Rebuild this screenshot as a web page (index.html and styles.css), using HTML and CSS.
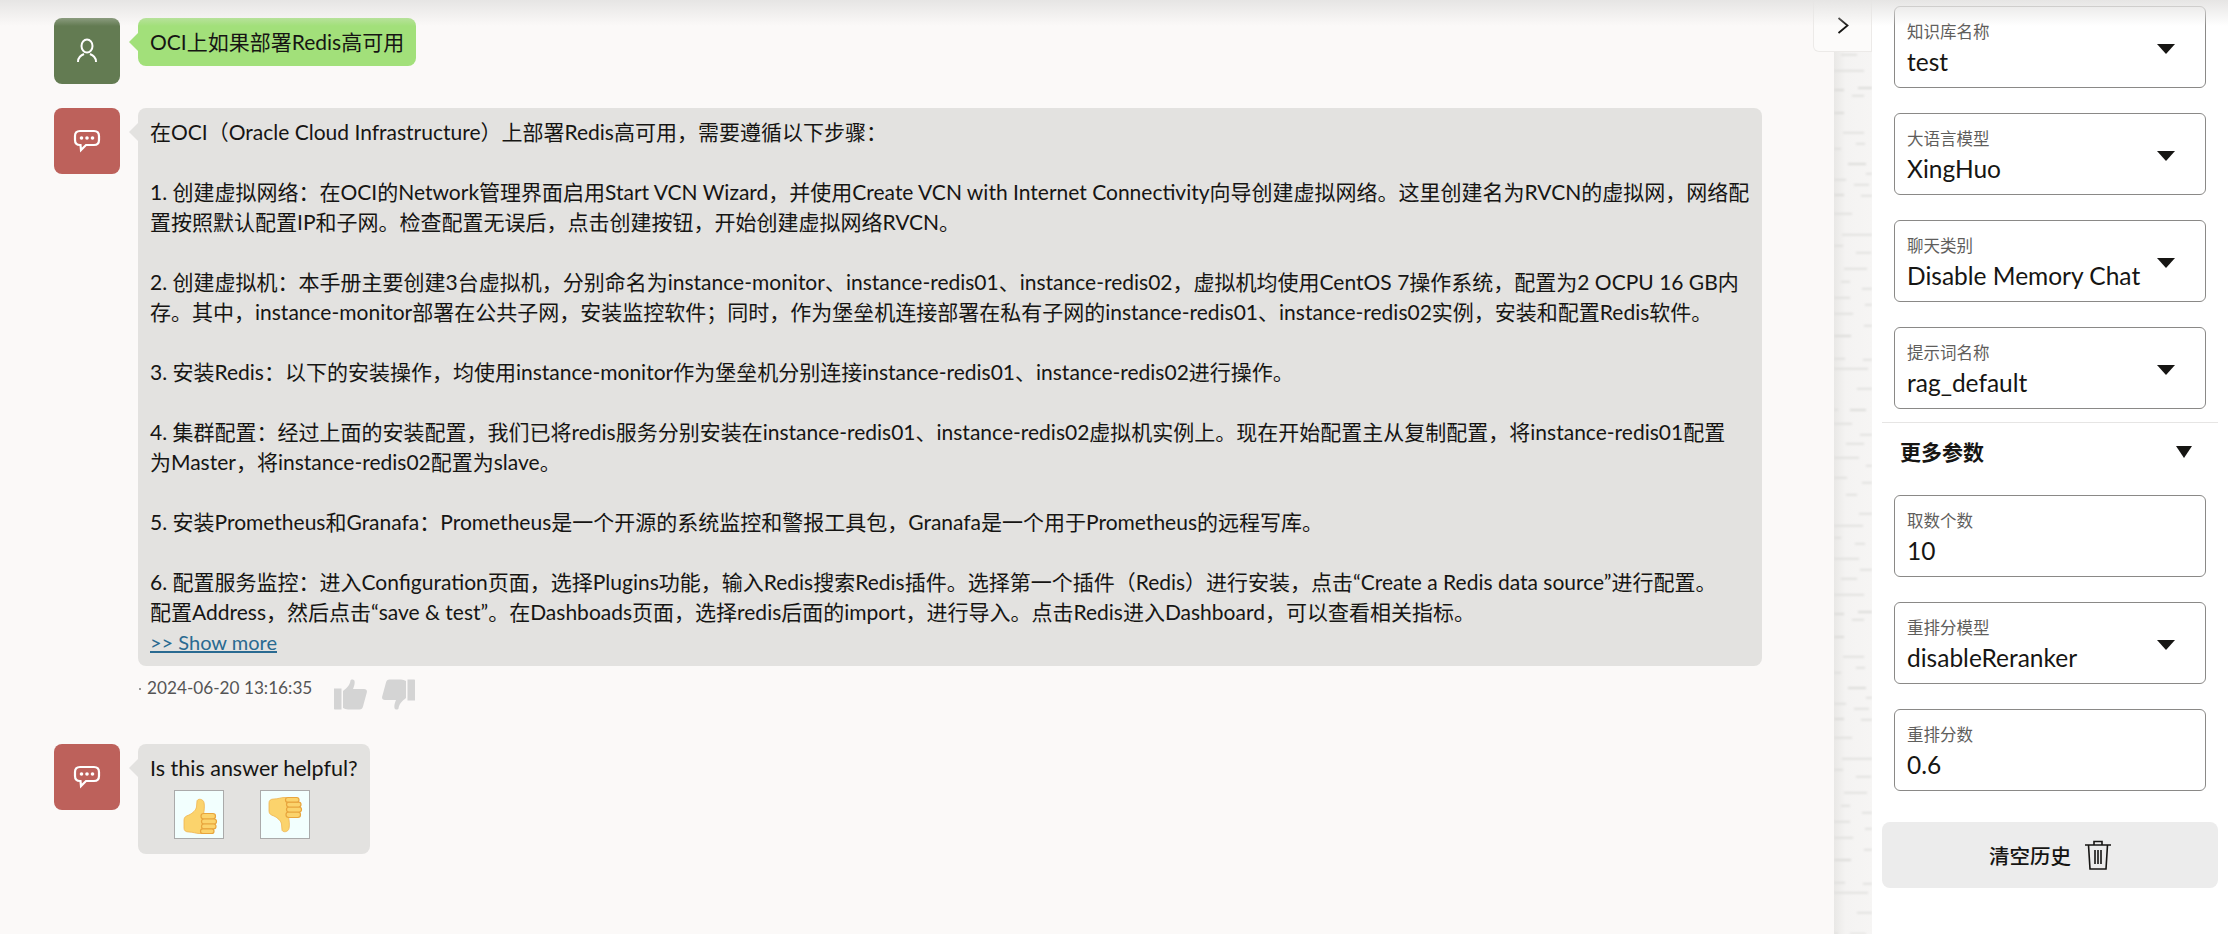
FILE: index.html
```html
<!DOCTYPE html>
<html>
<head>
  <title>Chat</title>
  <link rel="stylesheet" href="styles.css">
</head>
<body>
  <div class="top-shade"></div>
  <div class="page">
    <main class="chat">
      <div class="messages">
        <div class="row">
          <div class="avatar avatar-user">
            <svg width="24" height="26" viewBox="0 0 24 26" fill="none" stroke="#fff" stroke-width="2"><ellipse cx="12" cy="8" rx="5.5" ry="6.5"/><path d="M3 24c0-5 3-6.500 6-8M21 24c0-5-3-6.500-6-8"/></svg>
          </div>
          <div class="bubble bubble-user">OCI上如果部署Redis高可用</div>
        </div>

        <div class="row row-answer">
          <div class="avatar avatar-bot">
            <svg width="28" height="24" viewBox="0 0 28 24" fill="none" stroke="#fff" stroke-width="2.200"><path d="M7 2h14c3 0 5 2 5 5v4c0 3-2 5-5 5H13l-5 5-.5-5H7c-3 0-5-2-5-5V7c0-3 2-5 5-5z"/><g fill="#fff" stroke="none"><circle cx="8.500" cy="9" r="1.800"/><circle cx="14" cy="9" r="1.800"/><circle cx="19.500" cy="9" r="1.800"/></g></svg>
          </div>
          <div class="answer">
            <div class="bubble bubble-bot"><div class="answer-text">在OCI（Oracle Cloud Infrastructure）上部署Redis高可用，需要遵循以下步骤：

1. 创建虚拟网络：在OCI的Network管理界面启用Start VCN Wizard，并使用Create VCN with Internet Connectivity向导创建虚拟网络。这里创建名为RVCN的虚拟网，网络配
置按照默认配置IP和子网。检查配置无误后，点击创建按钮，开始创建虚拟网络RVCN。

2. 创建虚拟机：本手册主要创建3台虚拟机，分别命名为instance-monitor、instance-redis01、instance-redis02，虚拟机均使用CentOS 7操作系统，配置为2 OCPU 16 GB内
存。其中，instance-monitor部署在公共子网，安装监控软件；同时，作为堡垒机连接部署在私有子网的instance-redis01、instance-redis02实例，安装和配置Redis软件。

3. 安装Redis：以下的安装操作，均使用instance-monitor作为堡垒机分别连接instance-redis01、instance-redis02进行操作。

4. 集群配置：经过上面的安装配置，我们已将redis服务分别安装在instance-redis01、instance-redis02虚拟机实例上。现在开始配置主从复制配置，将instance-redis01配置
为Master，将instance-redis02配置为slave。

5. 安装Prometheus和Granafa：Prometheus是一个开源的系统监控和警报工具包，Granafa是一个用于Prometheus的远程写库。

6. 配置服务监控：进入Configuration页面，选择Plugins功能，输入Redis搜索Redis插件。选择第一个插件（Redis）进行安装，点击“Create a Redis data source”进行配置。
配置Address，然后点击“save &amp; test”。在Dashboads页面，选择redis后面的import，进行导入。点击Redis进入Dashboard，可以查看相关指标。</div><a class="show-more" href="#">&gt;&gt; Show more</a></div>
            <div class="meta">
              <span class="dot"></span>
              <span class="time">2024-06-20 13:16:35</span>
              <svg class="vote" width="33" height="31" viewBox="0 0 33 31" fill="#d4d4d4"><path d="M0 9.500h7.500v21H1c-.6 0-1-.4-1-1z"/><path d="M9 12c4-3 7-6 7.500-10.500C17 0 20 0 20.500 2c.6 2.500-.5 5.500-1.500 8h11c2.500 0 3.300 1.500 2.800 3.500L29 27.500c-.5 2-1.500 3-3.500 3H14c-2 0-3.500-1-5-1.500z"/></svg>
              <svg class="vote" width="33" height="31" viewBox="0 0 33 31" fill="#d4d4d4"><path d="M33 21.500h-7.500V.5H32c.6 0 1 .4 1 1z"/><path d="M24 19c-4 3-7 6-7.500 10.500C16 31 13 31 12.500 29c-.6-2.500.5-5.500 1.500-8H3c-2.500 0-3.300-1.500-2.800-3.500L4 3.500C4.500 1.500 5.500.5 7.500.5H19c2 0 3.500 1 5 1.500z"/></svg>
            </div>
          </div>
        </div>

        <div class="row">
          <div class="avatar avatar-bot">
            <svg width="28" height="24" viewBox="0 0 28 24" fill="none" stroke="#fff" stroke-width="2.200"><path d="M7 2h14c3 0 5 2 5 5v4c0 3-2 5-5 5H13l-5 5-.5-5H7c-3 0-5-2-5-5V7c0-3 2-5 5-5z"/><g fill="#fff" stroke="none"><circle cx="8.500" cy="9" r="1.800"/><circle cx="14" cy="9" r="1.800"/><circle cx="19.500" cy="9" r="1.800"/></g></svg>
          </div>
          <div class="bubble bubble-bot bubble-ask">
            <div>Is this answer helpful?</div>
            <div class="feedback">
              <button class="emoji-btn">
                <svg width="48" height="47" viewBox="0 0 48 47">
                  <g id="thumbHand">
                    <path d="M9 29c0-3 2-4 5-5 4-2 7-5 7.500-8 .3-2 .2-4 .5-6 .4-2.500 6-2.500 7 1.500 .7 3 .3 8-.5 12l-2 19H24c-3 0-6-1.500-10-1.500-3.500 0-5-1.500-5-4z" fill="#fbd36c" stroke="#efb450" stroke-width=".8"/>
                    <g fill="#fbd36c" stroke="#e8a53d" stroke-width="1.200">
                      <rect x="26" y="22.500" width="14.500" height="5.500" rx="2.700"/>
                      <rect x="26.500" y="28" width="15" height="5" rx="2.500"/>
                      <rect x="26.500" y="33" width="14.500" height="4.800" rx="2.400"/>
                      <rect x="25.500" y="37.800" width="13.500" height="4.700" rx="2.300"/>
                    </g>
                  </g>
                </svg>
              </button>
              <button class="emoji-btn">
                <svg width="48" height="47" viewBox="0 0 48 47">
                  <g transform="translate(-1 49) scale(1 -1)">
                    <path d="M9 29c0-3 2-4 5-5 4-2 7-5 7.500-8 .3-2 .2-4 .5-6 .4-2.500 6-2.500 7 1.500 .7 3 .3 8-.5 12l-2 19H24c-3 0-6-1.500-10-1.500-3.500 0-5-1.500-5-4z" fill="#fbd36c" stroke="#efb450" stroke-width=".8"/>
                    <g fill="#fbd36c" stroke="#e8a53d" stroke-width="1.200">
                      <rect x="26" y="22.500" width="14.500" height="5.500" rx="2.700"/>
                      <rect x="26.500" y="28" width="15" height="5" rx="2.500"/>
                      <rect x="26.500" y="33" width="14.500" height="4.800" rx="2.400"/>
                      <rect x="25.500" y="37.800" width="13.500" height="4.700" rx="2.300"/>
                    </g>
                  </g>
                </svg>
              </button>
            </div>
          </div>
        </div>
      </div>

      <div class="strip">
        <svg width="38" height="882">
          <defs>
            <linearGradient id="stripFade" x1="0" x2="1" y1="0" y2="0">
              <stop offset="0" stop-color="#e9e8e6"/>
              <stop offset="0.3" stop-color="#f4f3f2"/>
              <stop offset="1" stop-color="#f6f5f4"/>
            </linearGradient>
            <pattern id="stripDash" width="38" height="524" patternUnits="userSpaceOnUse">
              <g fill="#dcdbd9">
                <rect x="7" y="2" width="16" height="1.500"/><rect x="0" y="18" width="30" height="1.500"/><rect x="0" y="37" width="10" height="2"/><rect x="24" y="35" width="15" height="2"/><rect x="18" y="43" width="12" height="1.500"/>
                <rect x="0" y="60" width="10" height="2"/><rect x="9" y="80" width="21" height="1.500"/><rect x="22" y="91" width="9" height="1.500"/><rect x="0" y="96" width="7" height="1.500"/><rect x="14" y="111" width="18" height="2"/>
                <rect x="32" y="121" width="7" height="1.500"/><rect x="0" y="127" width="12" height="1.500"/><rect x="20" y="132" width="15" height="1.500"/><rect x="0" y="142" width="10" height="2"/><rect x="27" y="143" width="13" height="1.500"/>
                <rect x="0" y="161" width="18" height="1.500"/><rect x="8" y="182" width="31" height="1.500"/><rect x="0" y="193" width="9" height="1.500"/><rect x="22" y="200" width="15" height="1.500"/><rect x="10" y="216" width="23" height="1.500"/>
                <rect x="7" y="229" width="9" height="1.500"/><rect x="28" y="236" width="11" height="1.500"/><rect x="0" y="245" width="16" height="1.500"/><rect x="31" y="252" width="8" height="1.500"/><rect x="0" y="261" width="19" height="1.500"/>
                <rect x="30" y="273" width="9" height="1.500"/><rect x="0" y="283" width="17" height="2"/><rect x="0" y="306" width="11" height="1.500"/><rect x="29" y="307" width="10" height="1.500"/><rect x="0" y="316" width="34" height="1.500"/>
                <rect x="23" y="336" width="16" height="1.500"/><rect x="0" y="357" width="4" height="1.500"/><rect x="16" y="357" width="16" height="2"/><rect x="0" y="371" width="18" height="1.500"/><rect x="26" y="382" width="13" height="1.500"/>
                <rect x="12" y="391" width="18" height="1.500"/><rect x="0" y="405" width="25" height="1.500"/><rect x="32" y="413" width="7" height="1.500"/><rect x="0" y="425" width="13" height="1.500"/><rect x="28" y="430" width="12" height="1.500"/>
                <rect x="12" y="442" width="11" height="1.500"/><rect x="25" y="461" width="15" height="1.500"/><rect x="0" y="473" width="29" height="1.500"/><rect x="0" y="485" width="7" height="1.500"/><rect x="21" y="491" width="10" height="1.500"/>
                <rect x="0" y="506" width="25" height="1.500"/><rect x="26" y="517" width="14" height="1.500"/>
              </g>
            </pattern>
            <filter id="stripBlur"><feGaussianBlur stdDeviation="0.800"/></filter>
          </defs>
          <rect width="38" height="882" fill="url(#stripFade)"/>
          <rect width="38" height="882" fill="url(#stripDash)" filter="url(#stripBlur)"/>
        </svg>
      </div>

      <div class="collapse-tab">
        <svg width="12" height="20" viewBox="0 0 12 20" fill="none" stroke="#161513" stroke-width="1.800"><path d="M1.500 2l9 7.500-9 7.500"/></svg>
      </div>
    </main>

    <aside class="side">
      <div class="field">
        <div class="field-label">知识库名称</div>
        <div class="field-value">test</div>
        <span class="caret"></span>
      </div>
      <div class="field">
        <div class="field-label">大语言模型</div>
        <div class="field-value">XingHuo</div>
        <span class="caret"></span>
      </div>
      <div class="field">
        <div class="field-label">聊天类别</div>
        <div class="field-value">Disable Memory Chat</div>
        <span class="caret"></span>
      </div>
      <div class="field">
        <div class="field-label">提示词名称</div>
        <div class="field-value">rag_default</div>
        <span class="caret"></span>
      </div>

      <div class="more">
        <span>更多参数</span>
        <span class="caret caret-more"></span>
      </div>

      <div class="field">
        <div class="field-label">取数个数</div>
        <div class="field-value">10</div>
      </div>
      <div class="field">
        <div class="field-label">重排分模型</div>
        <div class="field-value">disableReranker</div>
        <span class="caret"></span>
      </div>
      <div class="field">
        <div class="field-label">重排分数</div>
        <div class="field-value">0.6</div>
      </div>

      <button class="clear-btn">
        <span>清空历史</span>
        <svg width="26" height="30" viewBox="0 0 26 30" fill="none" stroke="#161513" stroke-width="1.600"><path d="M0 5h26M9 5V1.500h8V5M3.500 5l1.500 24h16l1.500-24M10 10v14M13 10v14M16 10v14"/></svg>
      </button>
    </aside>
  </div>
</body>
</html>
```

FILE: styles.css
```css
* {
  box-sizing: border-box;
  margin: 0;
  padding: 0;
}
html, body {
  height: 100%;
  overflow: hidden;
}
body {
  background-color: #fbf9f8;
  color: #161513;
  font-family: Lato, "Noto Sans CJK SC", sans-serif;
  font-size: 21px;
  line-height: 30px;
}
.top-shade {
  position: absolute;
  top: 0;
  left: 0;
  right: 0;
  height: 26px;
  background: linear-gradient(#e6e5e4, rgba(240, 239, 238, 0));
  pointer-events: none;
  z-index: 5;
}
.page {
  display: flex;
  height: 100%;
}

/* chat */
.chat {
  position: relative;
  display: flex;
  width: 1872px;
}
.messages {
  width: 1834px;
  padding: 18px 0 0 54px;
}
.row {
  display: flex;
  align-items: flex-start;
  margin-bottom: 24px;
}
.avatar {
  display: flex;
  align-items: center;
  justify-content: center;
  flex: none;
  width: 66px;
  height: 66px;
  margin-right: 18px;
  border-radius: 8px;
}
.avatar-user {
  background-color: #637b52;
}
.avatar-bot {
  background-color: #bd615b;
}
.bubble {
  position: relative;
  padding: 9px 12px;
  border-radius: 8px;
}
.bubble::before {
  content: "";
  position: absolute;
  top: 24px;
  left: -9px;
  border-style: solid;
  border-width: 9px 9px 9px 0;
  border-color: transparent;
  transform: translateY(-9px);
}
.bubble-user {
  background-color: #a2e07a;
}
.bubble-user::before {
  border-right-color: #a2e07a;
}
.bubble-bot {
  background-color: #e3e2e0;
}
.bubble-bot::before {
  border-right-color: #e3e2e0;
}
.answer {
  width: 1624px;
}
.answer-text {
  white-space: pre-line;
}
.show-more {
  color: #2a6a91;
  font-size: 20px;
}
.meta {
  display: flex;
  align-items: flex-start;
  height: 54px;
  padding-top: 13px;
  font-size: 17.200px;
  line-height: 26px;
  color: #555;
}
.dot {
  width: 2px;
  height: 2px;
  margin: 9px 6px 0 1px;
  background-color: #999;
}
.time {
  width: 187px;
  margin-top: -4px;
}
.vote {
  margin-right: 15px;
}
.bubble-ask {
  width: 232px;
  height: 110px;
  font-size: 21.500px;
  white-space: nowrap;
}
.feedback {
  display: flex;
  gap: 36px;
  padding: 7px 0 0 24px;
}
.emoji-btn {
  display: flex;
  align-items: center;
  justify-content: center;
  width: 50px;
  height: 49px;
  background-color: #f2fffe;
  border: 1px solid #aaa;
}

/* textured strip and collapse tab */
.strip {
  width: 38px;
  padding-top: 52px;
  border-right: 1px solid #e6e5e4;
}
.strip svg {
  display: block;
}
.collapse-tab {
  position: absolute;
  top: 0;
  right: 0;
  display: flex;
  align-items: center;
  justify-content: center;
  width: 59px;
  height: 52px;
  background-color: #fcfbfa;
  border: 1px solid #eceae8;
  border-top: none;
  border-bottom-left-radius: 6px;
  z-index: 2;
}

/* side panel */
.side {
  width: 356px;
  padding: 6px 10px 0;
  background-color: #fff;
}
.field {
  position: relative;
  height: 82px;
  margin: 0 12px 25px;
  padding: 13px 12px 0;
  background-color: #fff;
  border: 1px solid #8a8987;
  border-radius: 6px;
}
.field-label {
  font-size: 16.500px;
  line-height: 24px;
  color: #5f5e5c;
}
.field-value {
  margin-top: 2px;
  font-size: 24.500px;
  line-height: 32px;
  white-space: nowrap;
}
.caret {
  position: absolute;
  top: 37px;
  right: 30px;
  border-style: solid;
  border-width: 10px 9px 0;
  border-color: #161513 transparent transparent;
}
.more {
  display: flex;
  align-items: center;
  justify-content: space-between;
  height: 73px;
  margin-top: -12px;
  padding: 0 26px 14px 18px;
  border-top: 1px solid #e6e5e4;
  font-weight: 700;
  font-size: 21px;
}
.caret-more {
  position: static;
  border-width: 12px 8px 0;
}
.clear-btn {
  display: flex;
  align-items: center;
  justify-content: center;
  gap: 14px;
  width: 336px;
  height: 66px;
  margin-top: 31px;
  background-color: #ececec;
  border: none;
  border-radius: 8px;
  color: #161513;
  font-family: inherit;
  font-size: 20.500px;
  font-weight: 500;
}
```
